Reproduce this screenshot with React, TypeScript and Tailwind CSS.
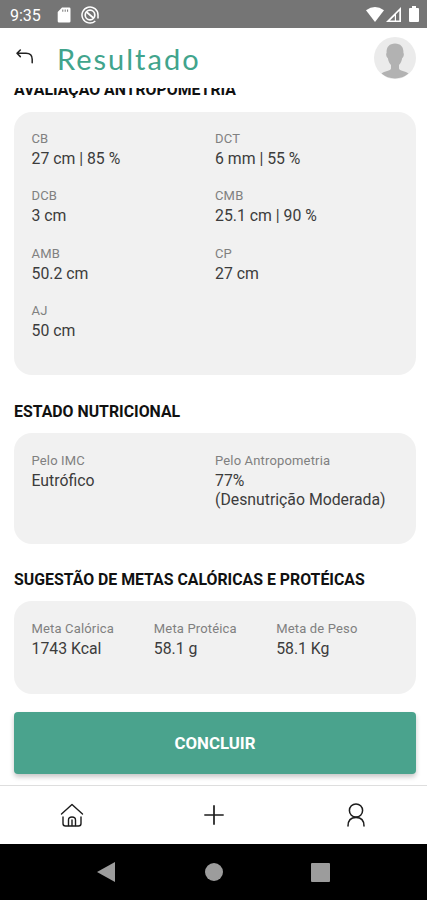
import type { ReactNode } from "react";

type Item = { label: string; value: string };

const anthropometry: Item[] = [
  { label: "CB", value: "27 cm | 85 %" },
  { label: "DCT", value: "6 mm | 55 %" },
  { label: "DCB", value: "3 cm" },
  { label: "CMB", value: "25.1 cm | 90 %" },
  { label: "AMB", value: "50.2 cm" },
  { label: "CP", value: "27 cm" },
  { label: "AJ", value: "50 cm" },
];

const nutrition: Item[] = [
  { label: "Pelo IMC", value: "Eutrófico" },
  { label: "Pelo Antropometria", value: "77%\n(Desnutrição Moderada)" },
];

const goals: Item[] = [
  { label: "Meta Calórica", value: "1743 Kcal" },
  { label: "Meta Protéica", value: "58.1 g" },
  { label: "Meta de Peso", value: "58.1 Kg" },
];

function Field({ label, value }: Item) {
  return (
    <div>
      <p className="text-[13px] leading-[18px] tracking-[0.16px] text-[#808080]">{label}</p>
      <p className="mt-px whitespace-pre text-[15.8px] leading-[19px] text-[#3c3c3c]">{value}</p>
    </div>
  );
}

function SectionTitle({ children }: { children: ReactNode }) {
  return <h2 className="whitespace-nowrap text-[15.85px] font-bold leading-5 text-[#111]">{children}</h2>;
}

function StatusBar() {
  return (
    <div className="flex h-[28px] shrink-0 items-center bg-[#757575] pl-[10px] pr-2 text-white">
      <span className="w-[47px] pt-[3px] text-base leading-5">9:35</span>
      <svg className="mt-px h-4 w-[14px]" viewBox="0 0 14 16" fill="currentColor">
        <path fillRule="evenodd" d="M5 .500h7.200q1.300 0 1.300 1.300v12.400q0 1.300-1.300 1.300H2q-1.300 0-1.300-1.300V5zM5.300 2.500v2.300h1V2.500zm2.400 0v2.300h1V2.500zm2.400 0v2.300h1V2.500z" />
      </svg>
      <svg className="ml-[10px] mt-px h-[18px] w-[18px]" viewBox="0 0 18 18" fill="none" stroke="currentColor">
        <path d="M14.300 15A8 8 0 1 1 17 9v3.500" strokeWidth="1.500" />
        <circle cx="9" cy="9" r="4.800" strokeWidth="1.700" />
        <path d="m5.500 6 7 6" strokeWidth="1.700" />
      </svg>
      <svg className="ml-auto mt-px h-[15px] w-[18px]" viewBox="0 0 18 15" fill="currentColor">
        <path d="M0 3.200Q9-3 18 3.200L9 15z" />
      </svg>
      <svg className="ml-[2px] mt-px h-[15px] w-[15px]" viewBox="0 0 15 15">
        <path d="M15 0v15H0z" fill="currentColor" />
        <path d="M13.300 4v9.500H10V7.300z" fill="#757575" />
        <path d="M8.800 8.800v4.700H4z" fill="#757575" />
      </svg>
      <svg className="ml-[8px] h-4 w-[10px]" viewBox="0 0 10 16" fill="currentColor">
        <path d="M3 0h4v2h2q1 0 1 1v12q0 1-1 1H1q-1 0-1-1V3q0-1 1-1h2z" />
      </svg>
    </div>
  );
}

function Header() {
  return (
    <header className="flex h-[60px] shrink-0 items-center bg-white pl-[16px] pr-[11px]">
      <svg className="-mt-[3px] h-[15px] w-[18px]" viewBox="0 0 18 15" fill="none" stroke="#222" strokeWidth="1.500" strokeLinecap="round" strokeLinejoin="round">
        <path d="M4.300 1 1 4.300l3.300 3.300M1.300 4.300H10q6.200 0 6.200 6v3.500" />
      </svg>
      <h1 className="ml-[23px] whitespace-nowrap pt-[2px] font-['Lato'] text-[29px] leading-9 tracking-[2px] text-[#41a48c]">Resultado</h1>
      <svg className="ml-auto h-[42px] w-[42px]" viewBox="0 0 42 42">
        <circle cx="21" cy="21" r="21" fill="#ebebeb" />
        <path d="M21 6.500c-6 0-8.800 4-8.400 9.500-1 .400-.300 4.500 1.200 5 .500 3.500 1.800 5.500 3.200 7v3.500c0 2.500-7 2.500-9.500 5A21 21 0 0 0 34.500 36.500c-2.500-2.500-9.500-2.500-9.500-5V28c1.400-1.500 2.700-3.500 3.200-7 1.500-.500 2.200-4.600 1.200-5 .400-5.500-2.400-9.500-8.400-9.500z" fill="#b2b2b2" />
      </svg>
    </header>
  );
}

function TabBar() {
  return (
    <nav className="grid h-[59px] shrink-0 grid-cols-3 items-center justify-items-center border-t border-[#dedede] bg-white text-[#1c1c1c]">
      <svg className="ml-px h-6 w-6" viewBox="0 0 24 24" fill="none" stroke="currentColor" strokeWidth="1.400" strokeLinecap="round" strokeLinejoin="round">
        <path d="M1.500 11 12 1.500 22.500 11" />
        <path d="M3 14v6.500q0 2.500 2.500 2.500h13q2.500 0 2.500-2.500V14" />
        <path d="M8.500 22.500V17q0-3 3.500-3t3.500 3v5.500M12 17v5.500" />
      </svg>
      <svg className="ml-px h-5 w-5" viewBox="0 0 20 20" fill="none" stroke="currentColor" strokeWidth="1.700">
        <path d="M10 .300v19.400M.300 10h19.400" />
      </svg>
      <svg className="ml-px h-6 w-[18px]" viewBox="0 0 18 24" fill="none" stroke="currentColor" strokeWidth="1.500" strokeLinecap="round">
        <circle cx="9" cy="7.500" r="6.600" />
        <path d="M1 23q0-8.500 8-8.500t8 8.500" />
      </svg>
    </nav>
  );
}

function SystemNav() {
  return (
    <div className="grid h-14 shrink-0 grid-cols-3 items-center justify-items-center bg-black px-[53px] text-[#9c9c9c]">
      <svg className="-ml-px h-5 w-[18px]" viewBox="0 0 18 20" fill="currentColor">
        <path d="M18 0v20L0 10z" />
      </svg>
      <div className="h-[18px] w-[18px] rounded-full bg-[#9c9c9c]" />
      <div className="h-[19px] w-[19px] rounded-[1px] bg-[#9c9c9c]" />
    </div>
  );
}

export default function App() {
  return (
    <div className="flex h-[900px] w-[427px] flex-col overflow-hidden bg-white font-['Roboto',sans-serif]">
      <StatusBar />
      <Header />
      <main className="flex-1 overflow-hidden pl-[14px] pr-[11px]">
        <div className="-mt-2">
          <SectionTitle>AVALIAÇÃO ANTROPOMETRIA</SectionTitle>
        </div>
        <section className="mt-3 grid h-[263px] auto-rows-[57.300px] grid-cols-2 rounded-[18px] bg-[#f1f1f1] px-[17.500px] pt-[18px]">
          {anthropometry.map((item) => (
            <Field key={item.label} {...item} />
          ))}
        </section>

        <div className="mt-[27px]">
          <SectionTitle>ESTADO NUTRICIONAL</SectionTitle>
        </div>
        <section className="mt-[11px] grid h-[111px] grid-cols-2 rounded-[18px] bg-[#f1f1f1] px-[17.500px] pt-[19px]">
          {nutrition.map((item) => (
            <Field key={item.label} {...item} />
          ))}
        </section>

        <div className="mt-[26px]">
          <SectionTitle>SUGESTÃO DE METAS CALÓRICAS E PROTÉICAS</SectionTitle>
        </div>
        <section className="mt-[11px] grid h-[93px] grid-cols-3 rounded-[18px] bg-[#f1f1f1] px-[17.500px] pt-[19px]">
          {goals.map((item) => (
            <Field key={item.label} {...item} />
          ))}
        </section>

        <button className="mt-[18px] h-[62px] w-full rounded bg-[#4aa38d] pt-[2px] text-[16.8px] font-bold text-white shadow-[0_3px_5px_rgba(0,0,0,0.22)]">
          CONCLUIR
        </button>
      </main>
      <TabBar />
      <SystemNav />
    </div>
  );
}
